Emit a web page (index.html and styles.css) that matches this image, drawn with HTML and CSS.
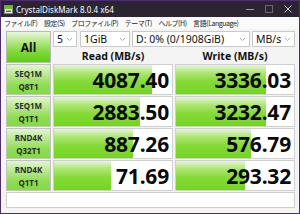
FILE: index.html
```html
<!DOCTYPE html>
<html lang="ja">
<head>
<meta charset="utf-8">
<title>CrystalDiskMark 8.0.4 x64</title>
<link rel="stylesheet" href="styles.css">
</head>
<body>
<div class="window">
  <div class="titlebar">
    <svg class="appicon" width="9" height="9" viewBox="0 0 9 9">
      <rect x="0.5" y="0.5" width="8" height="8" fill="#e8e8e8" stroke="#888" stroke-width="1"/>
      <rect x="1" y="1" width="7" height="3" fill="#5cc41a"/>
      <rect x="2" y="5.5" width="5" height="1.5" fill="#666"/>
    </svg>
    <span class="title">CrystalDiskMark 8.0.4 x64</span>
    <div class="controls">
      <svg width="8" height="8" viewBox="0 0 8 8"><path d="M0 4.5H8" stroke="#9a9a9a" stroke-width="1"/></svg>
      <svg width="8" height="8" viewBox="0 0 8 8"><rect x="0.5" y="0.5" width="7" height="7" fill="none" stroke="#6a6a6a" stroke-width="1"/></svg>
      <svg width="8" height="8" viewBox="0 0 8 8"><path d="M0.5 0.5L7.5 7.5M7.5 0.5L0.5 7.5" stroke="#c8c8c8" stroke-width="1"/></svg>
    </div>
  </div>
  <div class="menubar">
    <span class="menu">ファイル(F)</span>
    <span class="menu">設定(S)</span>
    <span class="menu">プロファイル(P)</span>
    <span class="menu">テーマ(T)</span>
    <span class="menu">ヘルプ(H)</span>
    <span class="menu">言語(Language)</span>
  </div>
  <div class="main">
    <div class="grid">
      <div class="all">All</div>
      <div class="selects">
        <div class="select s-count"><span>5</span><svg class="chev" width="5" height="3" viewBox="0 0 5 3"><path d="M0 0L2.5 2.5L5 0" fill="none" stroke="#999" stroke-width="0.8"/></svg></div>
        <div class="select s-size"><span>1GiB</span><svg class="chev" width="5" height="3" viewBox="0 0 5 3"><path d="M0 0L2.5 2.5L5 0" fill="none" stroke="#999" stroke-width="0.8"/></svg></div>
        <div class="select s-drive"><span>D: 0% (0/1908GiB)</span><svg class="chev" width="5" height="3" viewBox="0 0 5 3"><path d="M0 0L2.5 2.5L5 0" fill="none" stroke="#999" stroke-width="0.8"/></svg></div>
        <div class="select s-unit"><span>MB/s</span><svg class="chev" width="5" height="3" viewBox="0 0 5 3"><path d="M0 0L2.5 2.5L5 0" fill="none" stroke="#999" stroke-width="0.8"/></svg></div>
      </div>
      <div class="head">Read (MB/s)</div>
      <div class="head">Write (MB/s)</div>

      <div class="label">SEQ1M<br>Q8T1</div>
      <div class="value" style="--w:98px">4087.40</div>
      <div class="value" style="--w:90px">3336.03</div>

      <div class="label">SEQ1M<br>Q1T1</div>
      <div class="value" style="--w:86px">2883.50</div>
      <div class="value" style="--w:90px">3232.47</div>

      <div class="label">RND4K<br>Q32T1</div>
      <div class="value" style="--w:79px">887.26</div>
      <div class="value" style="--w:75px">576.79</div>

      <div class="label">RND4K<br>Q1T1</div>
      <div class="value" style="--w:57px">71.69</div>
      <div class="value" style="--w:69px">293.32</div>

      <div class="comment"></div>
    </div>
  </div>
</div>
</body>
</html>
```
FILE: styles.css
```css
* { box-sizing: border-box; }
html, body { margin: 0; padding: 0; }
body {
  width: 300px;
  height: 214px;
  overflow: hidden;
  font-family: "Noto Sans", "Noto Sans CJK JP", sans-serif;
  background: #f3f3f3;
}
.window {
  width: 300px;
  height: 214px;
  border: 1px solid #4b2e6b;
  background: #f4f4f4;
  display: flex;
  flex-direction: column;
}
.titlebar {
  height: 16px;
  flex: none;
  background: #2a2530;
  display: flex;
  align-items: center;
  padding-left: 3px;
}
.appicon { flex: none; }
.title {
  color: #ffffff;
  font-size: 8px;
  margin-left: 3px;
  letter-spacing: 0.05px;
}
.controls {
  margin-left: auto;
  display: flex;
  align-items: center;
  gap: 11px;
  padding-right: 7px;
}
.menubar {
  height: 12px;
  flex: none;
  background: #fafafa;
  display: flex;
  align-items: center;
  gap: 6.5px;
  padding-left: 3px;
  font-family: "Noto Sans CJK JP", sans-serif;
  font-size: 7px;
  letter-spacing: -0.45px;
  color: #1a1a1a;
}
.main {
  flex: 1;
  padding: 2px 0 0 5px;
}
.grid {
  display: grid;
  grid-template-columns: 45px 120px 120px;
  grid-template-rows: 16px 15px 31px 31px 31px 31px 16px;
  column-gap: 2px;
  row-gap: 1px;
}
.all {
  grid-row: 1 / 3;
  border: 1px solid #b9b9b9;
  background: linear-gradient(to bottom, #e9f8dc 0%, #b8ea8a 30%, #80d93a 65%, #62cc14 100%);
  display: flex;
  align-items: center;
  justify-content: center;
  font-weight: 700;
  font-size: 12px;
  color: #111;
}
.selects {
  grid-column: 2 / 4;
  display: flex;
  gap: 2px;
}
.select {
  border: 1px solid #c9c9c9;
  background: #fff;
  display: flex;
  align-items: center;
  padding-left: 3px;
  padding-right: 4px;
  font-size: 10.5px;
  color: #111;
  white-space: nowrap;
}
.select span { flex: 1; overflow: hidden; }
.chev { flex: none; }
.s-count { width: 24px; margin-right: 1px; }
.s-size { width: 50px; }
.s-drive { width: 118px; }
.s-unit { width: 43px; }
.head {
  display: flex;
  align-items: center;
  justify-content: center;
  font-weight: 700;
  font-size: 10.5px;
  color: #111;
}
.label {
  border: 1px solid #c2c2c2;
  background: linear-gradient(to bottom, #e3f6d2 0%, #b6e98b 35%, #8fdd52 70%, #84d944 100%);
  display: flex;
  align-items: center;
  justify-content: center;
  text-align: center;
  font-weight: 700;
  font-size: 8px;
  line-height: 13px;
  color: #2b2b2b;
}
.value {
  border: 1px solid #cfcfcf;
  background-color: #ffffff;
  background-image: linear-gradient(to bottom, #e6f7d8 0%, #b0e878 25%, #86db3a 55%, #73d420 100%);
  background-repeat: no-repeat;
  background-size: var(--w) 100%;
  display: flex;
  align-items: center;
  justify-content: flex-end;
  padding-right: 3px;
  font-weight: 700;
  font-size: 21px;
  color: #0a0a0a;
  letter-spacing: -0.2px;
}
.comment {
  grid-column: 1 / 4;
  border: 1px solid #cfcfcf;
  background: #fff;
}
```
